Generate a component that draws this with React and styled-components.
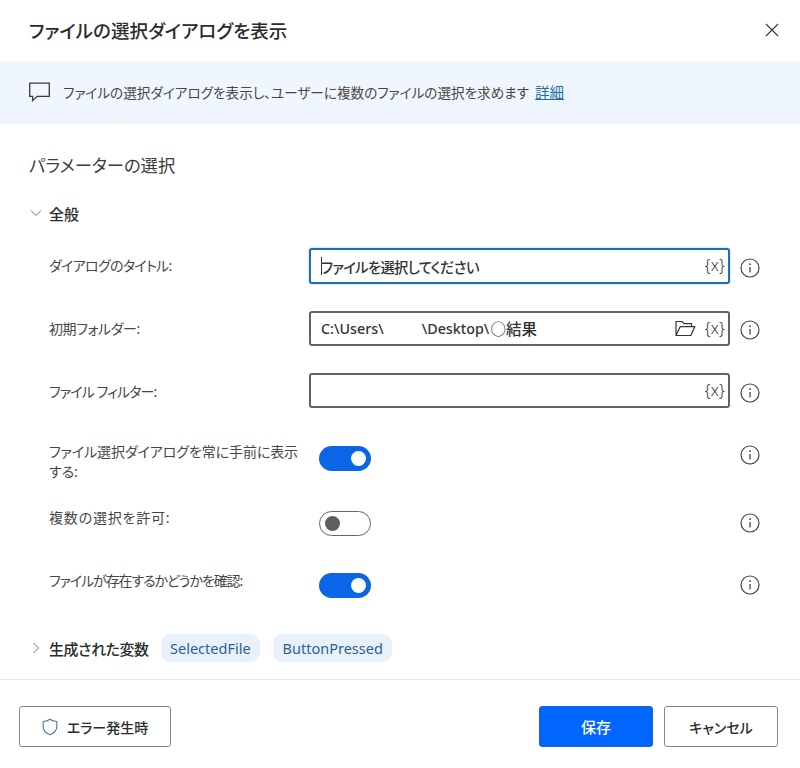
import React from "react";
import styled, { createGlobalStyle } from "styled-components";

const Global = createGlobalStyle`
  html, body { margin: 0; padding: 0; background: #fff; }
  * { box-sizing: border-box; }
`;

const Dialog = styled.div`
  width: 800px; height: 768px; background: #fff; overflow: hidden;
  display: flex; flex-direction: column;
  font-family: "Noto Sans", "Noto Sans CJK JP", sans-serif;
  font-feature-settings: "palt";
  color: #323130;
`;
const Header = styled.header`
  height: 61px; flex: none; padding: 0 21px 1px 29px;
  display: flex; align-items: center; justify-content: space-between;
`;
const Title = styled.h1`
  margin: 0; font-size: 18.5px; font-weight: 500; color: #2b2b2b;
`;
const Banner = styled.div`
  height: 63px; flex: none; background: #f0f6fd; padding: 0 29px 2px;
  display: flex; align-items: center; gap: 13px;
  font-size: 13.6px; color: #484644;
`;
const Link = styled.a`
  color: #1f6f9f; text-decoration: underline; margin-left: 6px; font-size: 14.5px;
`;
const Body = styled.div`
  flex: 1; display: flex; flex-direction: column; padding: 30px 0 0 29px;
`;
const SectionTitle = styled.h2`
  margin: 0; height: 24px; line-height: 24px; font-size: 17.3px; font-weight: 400; color: #3c3c3c;
`;
const GroupHead = styled.div`
  display: flex; align-items: center; height: 20px; margin-top: ${p => p.$mt}px; gap: 6px;
  font-size: 15px; font-weight: 500; color: #2b2b2b; letter-spacing: ${p => p.$ls}px;
`;
const Rows = styled.div`
  margin-top: 25px; padding-left: 20px; display: flex; flex-direction: column;
`;
const Row = styled.div`
  height: ${p => p.$h}px; display: grid; grid-template-columns: 260px 421px 1fr; align-items: start;
`;
const Label = styled.div`
  font-size: 14px; line-height: 20px; color: #484644; padding-top: ${p => p.$top}px; padding-right: 8px;
  letter-spacing: ${p => p.$ls}px;
`;
const Field = styled.div`
  height: ${p => p.$h}px; display: flex; align-items: center; padding: 0 3px 0 10px;
  border-radius: 3px; background: #fff;
  border: 2px solid ${p => (p.$focus ? "#1b6fb5" : "#636363")};
  box-shadow: ${p => (p.$focus ? "0 0 2px rgba(27,111,181,0.5)" : "none")};
  font-size: 14.3px; font-weight: 500; color: #333;
`;
const Value = styled.span`
  flex: 1; white-space: nowrap; display: flex; align-items: center; letter-spacing: ${p => p.$ls}px;
`;
const Caret = styled.span`
  width: 1px; height: 18px; background: #333; flex: none; margin-right: -1px;
`;
const Redacted = styled.span`
  display: inline-block; width: 38px;
`;
const PathKanji = styled.span`
  font-size: 15.5px; margin-left: 1px;
`;
const VarTag = styled.span`
  font-size: 16px; font-weight: 300; color: #333; margin-top: -2px; letter-spacing: 0.2px;
`;
const FolderIcon = styled.svg`
  margin-right: 9px; flex: none;
`;
const InfoWrap = styled.div`
  padding: ${p => p.$top}px 0 0 10px; display: flex;
`;
const ToggleCell = styled.div`
  padding: ${p => p.$top}px 0 0 10px;
`;
const Toggle = styled.div`
  width: 52px; height: 25px; border-radius: 13px; display: flex; align-items: center;
  justify-content: ${p => (p.$on ? "flex-end" : "flex-start")};
  padding: 0 5px;
  background: ${p => (p.$on ? "#0a66e6" : "#fff")};
  border: ${p => (p.$on ? "none" : "1.5px solid #666")};
`;
const Knob = styled.span`
  width: 15px; height: 15px; border-radius: 50%;
  background: ${p => (p.$on ? "#fff" : "#605e5c")};
`;
const Chip = styled.span`
  height: 28px; padding: 0 9.5px; display: flex; align-items: center; border-radius: 10px; letter-spacing: 0;
  background: #e8f1fb; color: #2f6090; font-size: 14.5px; font-weight: 400; margin-left: ${p => p.$ml}px;
`;
const Footer = styled.footer`
  border-top: 1px solid #e8e8e8; height: 89px; flex: none;
  padding: 26px 22px 0 19px; display: flex; align-items: flex-start; justify-content: space-between;
`;
const Actions = styled.div`
  display: flex; gap: 11px;
`;
const Button = styled.button`
  height: 41px; width: ${p => p.$w}px; border-radius: 3px;
  font: inherit; font-size: ${p => p.$size || 14}px; font-weight: 500; cursor: pointer;
  display: flex; align-items: center; justify-content: center; gap: 9px;
  background: ${p => (p.$primary ? "#0066ff" : "#fff")};
  color: ${p => (p.$primary ? "#fff" : "#2b2b2b")};
  border: 1px solid ${p => (p.$primary ? "#1a66d8" : "#8a8886")};
`;

const InfoIcon = () => (
  <svg width="20" height="20" viewBox="0 0 20 20" fill="none">
    <circle cx="10" cy="10" r="9" stroke="#444" strokeWidth="1.2" />
    <path d="M10 9v5.5" stroke="#444" strokeWidth="1.3" />
    <circle cx="10" cy="6.2" r="0.9" fill="#444" />
  </svg>
);
const Chevron = ({ d }) => (
  <svg width="14" height="14" viewBox="0 0 14 14" fill="none">
    <path d={d} stroke="#777" strokeWidth="1" />
  </svg>
);

const rows = [
  { type: "field", label: "ダイアログのタイトル:", ls: -0.7, h: 63, fh: 36, labelTop: 8, infoTop: 10, focus: true, caret: true, value: "ファイルを選択してください", valueLs: -0.65 },
  { type: "field", label: "初期フォルダー:", ls: -0.4, h: 62, fh: 35, labelTop: 8, infoTop: 9, path: true, valueLs: 0 },
  { type: "field", label: "ファイル フィルター:", ls: -0.9, h: 69, fh: 35, labelTop: 9, infoTop: 10, valueLs: 0 },
  { type: "toggle", label: "ファイル選択ダイアログを常に手前に表示する:", ls: -0.1, h: 65, labelTop: 0, toggleTop: 4, infoTop: 3, on: true },
  { type: "toggle", label: "複数の選択を許可:", ls: 0.8, h: 62, labelTop: 1, toggleTop: 4, infoTop: 6, on: false },
  { type: "toggle", label: "ファイルが存在するかどうかを確認:", ls: -1.1, h: 69, labelTop: 2, toggleTop: 4, infoTop: 6, on: true },
];

export default function App() {
  return (
    <Dialog>
      <Global />
      <Header>
        <Title>ファイルの選択ダイアログを表示</Title>
        <svg width="14" height="14" viewBox="0 0 14 14" fill="none">
          <path d="M1 1l12 12M13 1L1 13" stroke="#3a3a3a" strokeWidth="1.2" />
        </svg>
      </Header>
      <Banner>
        <svg width="21" height="20" viewBox="0 0 21 20" fill="none">
          <path d="M.7 1.2h19.6v13.1H8.2L3.6 18.6v-4.3H.7z" stroke="#3a3a3a" strokeWidth="1.3" />
        </svg>
        <span>
          ファイルの選択ダイアログを表示し、ユーザーに複数のファイルの選択を求めます
          <Link>詳細</Link>
        </span>
      </Banner>
      <Body>
        <SectionTitle>パラメーターの選択</SectionTitle>
        <GroupHead $mt={25} $ls={0}>
          <Chevron d="M2 4.5l5 5 5-5" />
          全般
        </GroupHead>
        <Rows>
          {rows.map(r => (
            <Row key={r.label} $h={r.h}>
              <Label $top={r.labelTop} $ls={r.ls}>{r.label}</Label>
              {r.type === "field" ? (
                <Field $h={r.fh} $focus={r.focus}>
                  <Value $ls={r.valueLs}>
                    {r.caret && <Caret />}
                    {r.value}
                    {r.path && (
                      <>
                        C:\Users\<Redacted />\Desktop\<PathKanji>○結果</PathKanji>
                      </>
                    )}
                  </Value>
                  {r.path && (
                    <FolderIcon width="21" height="17" viewBox="0 0 21 17" fill="none">
                      <path d="M1 15.5V1.5h6l2 2.2h7.5v3M1 15.5h14.8l4-8.8H5.2z" stroke="#333" strokeWidth="1.2" strokeLinejoin="round" />
                    </FolderIcon>
                  )}
                  <VarTag>{"{x}"}</VarTag>
                </Field>
              ) : (
                <ToggleCell $top={r.toggleTop}>
                  <Toggle $on={r.on}>
                    <Knob $on={r.on} />
                  </Toggle>
                </ToggleCell>
              )}
              <InfoWrap $top={r.infoTop}>
                <InfoIcon />
              </InfoWrap>
            </Row>
          ))}
        </Rows>
        <GroupHead $mt={0} $ls={-0.45}>
          <Chevron d="M4.5 2l5 5-5 5" />
          生成された変数
          <Chip $ml={6}>SelectedFile</Chip>
          <Chip $ml={7}>ButtonPressed</Chip>
        </GroupHead>
      </Body>
      <Footer>
        <Button $w={152}>
          <svg width="16" height="18" viewBox="0 0 16 18" fill="none">
            <path d="M8 1.2c2 1.5 4.2 2.2 6.8 2.3v5.3c0 3.5-2.5 6.2-6.8 8-4.3-1.8-6.8-4.5-6.8-8V3.5C3.8 3.4 6 2.7 8 1.2z" stroke="#5b8294" strokeWidth="1.2" />
          </svg>
          エラー発生時
        </Button>
        <Actions>
          <Button $w={114} $primary $size={15}>保存</Button>
          <Button $w={114}>キャンセル</Button>
        </Actions>
      </Footer>
    </Dialog>
  );
}
